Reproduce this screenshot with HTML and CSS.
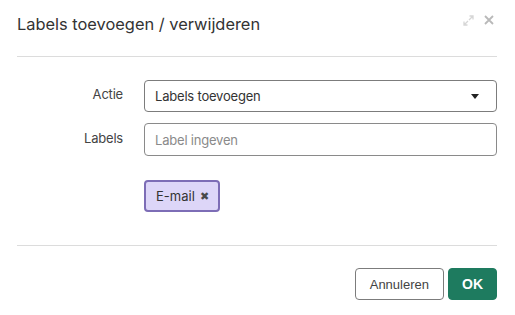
FILE: index.html
```html
<!DOCTYPE html>
<html lang="nl">

<head>
    <meta charset="utf-8">
    <meta content="width=device-width, initial-scale=1.0" name="viewport">
    <title>Labels toevoegen / verwijderen</title>
    <link rel="stylesheet" href="styles.css">
</head>

<body>

    <div class="modal">
        <!-- Header -->
        <div class="modal-header">
            <h3>Labels toevoegen / verwijderen</h3>
            <div class="header-tools">
                <svg class="tool-icon" width="11" height="11" viewBox="0 0 11 11">
                    <path d="M6.5 1H10V4.5M10 1L6 5M4.5 10H1V6.5M1 10L5 6" fill="none" stroke="#d6d6d6" stroke-width="1.3"/>
                </svg>
                <svg class="tool-icon" width="10" height="10" viewBox="0 0 10 10">
                    <path d="M1 1L9 9M9 1L1 9" fill="none" stroke="#b9b9b9" stroke-width="1.8"/>
                </svg>
            </div>
        </div>

        <!-- Body -->
        <div class="modal-body">
            <div class="form-row">
                <label for="actie">Actie</label>
                <div class="select-box" id="actie">
                    <span>Labels toevoegen</span>
                    <span class="caret"></span>
                </div>
            </div>
            <div class="form-row">
                <label for="labels">Labels</label>
                <input type="text" id="labels" placeholder="Label ingeven">
            </div>
            <div class="form-row tags-row">
                <span></span>
                <div class="tags">
                    <span class="tag">E-mail <span class="tag-remove">&#10006;</span></span>
                </div>
            </div>
        </div>

        <!-- Footer -->
        <div class="modal-footer">
            <button class="btn">Annuleren</button>
            <button class="btn btn-primary">OK</button>
        </div>
    </div>

</body>

</html>
```

FILE: styles.css
```css
body {
    font-family: Inter, "Noto Sans", Arial, sans-serif;
    margin: 0;
    padding: 0;
    background: #fff;
    color: #333;
}

.modal {
    width: 515px;
    padding: 0 18px 0 17px;
    box-sizing: border-box;
}

.modal-header {
    display: flex;
    justify-content: space-between;
    align-items: flex-start;
    height: 56px;
    border-bottom: 1px solid #dcdcdc;
}

.modal-header h3 {
    margin: 14px 0 0 0;
    font-size: 16.4px;
    font-weight: 400;
    color: #333;
}

.header-tools {
    display: flex;
    gap: 10px;
    padding-top: 15px;
    padding-right: 3px;
}

.tool-icon {
    display: block;
}

.modal-body {
    padding: 23px 0 33px 0;
    border-bottom: 1px solid #dcdcdc;
}

.form-row {
    display: grid;
    grid-template-columns: 106px 1fr;
    column-gap: 21px;
    align-items: center;
    margin-bottom: 11px;
}

.form-row label {
    text-align: right;
    font-size: 13px;
    letter-spacing: -0.2px;
    color: #444;
    padding-bottom: 4px;
}

.select-box,
.form-row input {
    height: 32px;
    box-sizing: border-box;
    border: 1px solid #7c7c7c;
    border-radius: 4px;
    font-family: inherit;
    font-size: 13px;
    letter-spacing: -0.2px;
    color: #333;
    padding: 0 10px;
}

.select-box {
    display: flex;
    align-items: center;
    justify-content: space-between;
    padding-right: 17px;
}

.form-row input {
    height: 33px;
    border-color: #8a8a8a;
    outline: none;
}

.form-row input::placeholder {
    color: #8a8a8a;
}

.caret {
    width: 0;
    height: 0;
    border-left: 4.5px solid transparent;
    border-right: 4.5px solid transparent;
    border-top: 5px solid #222;
}

.tags-row {
    margin-top: 24px;
    margin-bottom: 0;
}

.tags {
    display: flex;
}

.tag {
    display: inline-flex;
    align-items: center;
    gap: 5px;
    height: 32px;
    box-sizing: border-box;
    padding: 0 9px 0 10px;
    background: #ddd6f8;
    border: 2px solid #7d6db6;
    border-radius: 4px;
    font-size: 13px;
    color: #333;
}

.tag-remove {
    font-size: 11px;
    color: #4a4a4a;
}

.modal-footer {
    display: flex;
    justify-content: flex-end;
    gap: 4px;
    padding-top: 22px;
}

.btn {
    height: 32px;
    padding: 0 14px;
    font-family: Arial, "Liberation Sans", sans-serif;
    font-size: 13px;
    color: #444;
    background: #fff;
    border: 1px solid #7c7c7c;
    border-radius: 4px;
}

.btn-primary {
    width: 49px;
    padding: 0;
    background: #1e7b5f;
    border-color: #1e7b5f;
    color: #fff;
    font-weight: bold;
    font-size: 14px;
}
```
